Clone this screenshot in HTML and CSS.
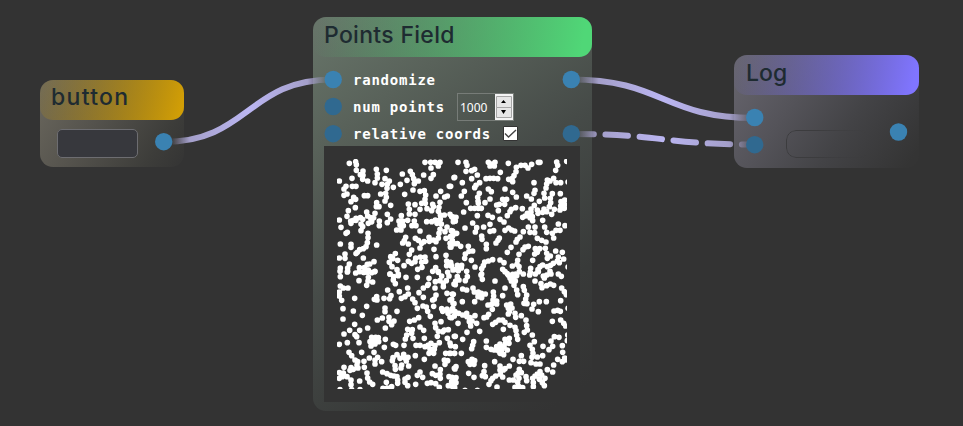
FILE: index.html
```
<!DOCTYPE html>
<html lang="en">
<head>
<meta charset="utf-8">
<title>Node editor</title>
<link rel="stylesheet" href="styles.css">
</head>
<body>
<main class="canvas">
  <section class="node node-button">
    <header class="title">button</header>
    <div class="button-body"><button class="push" aria-label="trigger"></button></div>
  </section>

  <section class="node node-points">
    <header class="title">Points Field</header>
    <div class="rows">
      <div class="row">randomize</div>
      <div class="row">num points
        <span class="spin"><span class="value">1000</span>
          <svg class="arrows" width="18" height="26" viewBox="0 0 18 26"><path fill="#f4f4f4" d="M0 0h18v26H0z"/><path fill="#e6e6e6" stroke="#a6a6a6" d="M1.500 2.500h15v11h-15zM1.500 13.500h15v10h-15z"/><path d="M6 9h5L8.500 6zM6 16h5l-2.500 4z"/></svg>
        </span>
      </div>
      <div class="row">relative coords
        <svg class="check" width="15" height="15" viewBox="0 0 15 15"><path fill="#fff" stroke="#333" d="M.5.5h14v14H.5z"/><path fill="none" stroke="#444" stroke-width="1.400" d="M2 7.500l3.500 3.500 7.500-7"/></svg>
      </div>
    </div>
    <div class="plot"><svg class="field" width="230" height="230" viewBox="337 159 230 230"></svg></div>
  </section>

  <section class="node node-log">
    <header class="title">Log</header>
    <div class="log-body"><div class="pill"></div></div>
  </section>

  <svg class="wires" width="963" height="426" viewBox="0 0 963 426">
    <defs>
      <linearGradient id="w1" gradientUnits="userSpaceOnUse" x1="164" y1="0" x2="333" y2="0"><stop offset=".04" stop-color="#a49fca" stop-opacity="0"/><stop offset=".15" stop-color="#a49fca"/><stop offset=".5" stop-color="#bbb6f2"/><stop offset=".85" stop-color="#a49fca"/><stop offset=".97" stop-color="#a49fca" stop-opacity="0"/></linearGradient>
      <linearGradient id="w2" gradientUnits="userSpaceOnUse" x1="571" y1="0" x2="755" y2="0"><stop offset=".02" stop-color="#a49fca" stop-opacity="0"/><stop offset=".15" stop-color="#a49fca"/><stop offset=".5" stop-color="#bbb6f2"/><stop offset=".86" stop-color="#a49fca"/><stop offset=".98" stop-color="#a49fca" stop-opacity="0"/></linearGradient>
    </defs>
    <g fill="none" stroke-width="6">
      <path stroke="url(#w1)" d="M164 142C248 142 248 79.500 333 79.500"/>
      <path stroke="url(#w2)" d="M571 79.500C663 79.500 663 118 755 118"/>
      <path class="dashed" stroke="url(#w2)" d="M571 134C663 134 663 144.500 755 144.500"/>
    </g>
    <g fill="#3a82b2">
      <circle cx="163.700" cy="141.700" r="8.700"/><circle cx="333.200" cy="79.500" r="8.700"/><circle cx="571.300" cy="79.500" r="8.700"/>
      <circle cx="754.700" cy="117.500" r="8.700"/><circle cx="898.500" cy="132" r="8.700"/>
    </g>
    <g fill="#306990">
      <circle cx="333.200" cy="106.500" r="8.700"/><circle cx="333.200" cy="133.700" r="8.700"/><circle cx="571.300" cy="133.700" r="8.700"/><circle cx="754.700" cy="144.700" r="8.700"/>
    </g>
  </svg>
</main>
<script src="points.js"></script>
</body>
</html>
```
FILE: styles.css
```
body { margin: 0; background: #333; }
.canvas { position: relative; width: 963px; height: 426px; overflow: hidden; background: #333; }
.node { position: absolute; box-sizing: border-box; border-radius: 13px; display: flex; flex-direction: column; }
.node-button { left: 40px; top: 80px; width: 144px; height: 87px; background: linear-gradient(122deg, #6b685e, #55534d 40%, #3d3d3a 80%, #343434); }
.node-points { left: 313px; top: 17px; width: 279px; height: 394px; background: linear-gradient(145deg, #68766a, #59625a 22%, #464b48 48%, #383a39 75%, #333 95%); }
.node-log { left: 734px; top: 55px; width: 185px; height: 113px; background: linear-gradient(125deg, #68666f, #545359 35%, #434346 62%, #343434 95%); }
.title { box-sizing: border-box; height: 40px; flex: none; padding-left: 11px; border-radius: 13px; font: 450 23px/37px Inter, sans-serif; color: #1e2b31; white-space: nowrap; }
.node-button .title { background: linear-gradient(105deg, #cc9a0618 0%, #d19e06 96%); letter-spacing: 1.3px; line-height: 35px; }
.node-points .title { background: linear-gradient(100deg, #50d77700 2%, #50d777 96%); letter-spacing: .3px; }
.node-log .title { padding-left: 12px; background: linear-gradient(102deg, #8075ff08 2%, #8075ff 96%); }
.button-body { padding: 9px 0 0 17px; }
.push { display: block; box-sizing: border-box; width: 81px; height: 29px; padding: 0; border: 1px solid #6d6d71; border-radius: 5px; background: #37383d; }
.rows { display: flex; flex-direction: column; padding: 9px 0 0 40px; }
.row { display: flex; align-items: center; height: 27px; font: bold 14px "DejaVu Sans Mono", monospace; letter-spacing: .77px; color: #fff; white-space: nowrap; }
.spin { box-sizing: border-box; display: flex; width: 57px; height: 28px; margin-left: 12px; border: 1px solid #777c78; justify-content: space-between; }
.value { padding-left: 2px; font: 12px/27px "Noto Sans", sans-serif; letter-spacing: 0; }
.arrows { display: block; }
.check { margin-left: 12px; }
.plot { box-sizing: border-box; width: 256px; height: 256px; margin: -1px 0 0 11px; padding: 13px; background: #333; }
.field { display: block; }
.log-body { padding: 35px 0 0 52px; }
.pill { width: 84px; height: 28px; box-sizing: border-box; border: 1px solid #3c3c3e; border-radius: 10px; -webkit-mask-image: linear-gradient(90deg, #000 35%, transparent 95%); mask-image: linear-gradient(90deg, #000 35%, transparent 95%); }
.wires { position: absolute; left: 0; top: 0; }
.dashed { stroke-linecap: round; stroke-dasharray: 22.6 11.7; stroke-dashoffset: 0; }
```
FILE: points.js
```
// Samples are grouped in tiles: origin in canvas pixels, offsets in thirds of a pixel.
const tiles = [
  [325, 150, `73,40 92,35 94,44 300,37 317,37 330,37 345,37 340,48 318,54 94,61 114,63 154,58 184,61 256,64 232,72 106,74 114,76 113,88 157,72 157,84 262,74 296,75 325,74 318,85 43,93 81,85 128,93 150,98 180,86 193,93 171,103 187,103 186,115 205,112 226,103 246,91 266,86 280,93 268,101 264,120 63,109 57,117 82,109 93,109 285,124 298,122 302,135 300,148 301,160 373,109 347,124 387,83 57,136 66,132 118,137 128,137 167,132 182,130 184,142 180,153 239,133 333,138 359,141 367,138 86,142 92,148 78,155 91,173 155,158 154,170 162,170 197,166 250,162 270,164 290,160 345,157 323,163 253,178 253,192 270,193 285,178 306,176 320,182 325,170 342,172 340,184 346,195 358,195 70,182 66,199 43,210 48,232 78,220 85,211 93,205 77,213 93,211 106,203 113,208 125,186 128,198 136,203 140,215 150,190 146,203 130,220 108,222 113,230 138,216 163,213 163,227 187,193 197,207 187,218 229,197 222,213 233,213 225,225 235,227 215,240 228,240 248,211 268,213 261,227 273,227 305,215 320,215 331,210 346,208 349,222 336,220 345,238 342,250 340,264 375,193 385,201 389,213 366,231 360,245 383,243 376,260 363,265 375,280 376,291 387,281 67,247 63,250 108,242 129,250 129,263 127,278 123,290 46,282 78,283 78,292 155,285 115,296 104,299 97,307 93,311 60,312 60,325 43,324 46,354 115,324 147,335 134,342 242,262 238,272 233,279 250,282 271,265 280,271 285,243 290,280 285,294 297,275 312,262 313,274 325,270 333,275 327,298 260,300 253,313 211,311 197,320 203,326 218,331 193,337 201,350 216,359 237,347 250,334 260,340 270,335 272,324 286,321 300,321 302,334 290,337 291,352 278,358 333,320 363,316 365,333 365,347 378,344 332,353 323,364 340,367 73,342 68,354 67,366 103,353 118,353 127,343 130,360 150,364 118,367 140,368 195,372 220,372 384,360`],
  [450, 150, `24,37 48,37 51,46 115,37 125,42 135,37 120,48 133,48 175,40 245,43 270,37 265,37 320,36 323,46 350,34 48,64 65,62 74,58 82,75 65,86 14,82 37,98 151,67 199,52 213,46 225,46 234,54 198,65 192,77 176,88 188,95 186,86 317,61 311,85 292,90 300,93 108,86 120,85 131,85 143,86 252,98 318,98 332,98 290,102 354,96 2,109 89,98 78,106 74,113 115,117 124,125 165,117 43,124 34,138 88,130 83,142 84,153 85,160 49,158 120,147 105,158 188,127 199,141 255,121 252,130 230,138 244,147 268,154 253,166 282,130 288,114 284,144 307,131 331,131 301,145 302,158 298,170 344,150 333,155 344,164 332,168 343,175 330,180 158,148 170,148 148,163 140,165 164,163 145,182 62,175 74,175 85,175 94,175 82,197 41,186 197,173 184,178 180,185 172,197 217,176 243,177 243,187 262,180 264,190 232,190 225,198 218,202 247,200 240,203 248,212 282,177 290,185 278,187 305,193 313,178 278,211 114,196 127,202 150,208 162,216 5,200 18,202 10,215 16,213 45,234 68,219 80,233 76,246 101,231 120,223 120,244 131,242 165,241 176,234 185,240 194,243 220,245 235,231 240,247 255,231 254,248 284,231 325,222 345,227 330,241 318,241 307,250 290,247 311,264 4,242 20,250 8,257 7,272 22,281 3,291 32,289 95,258 96,268 109,283 109,296 148,264 144,271 138,279 210,261 202,268 198,276 262,265 275,271 288,276 183,292 172,307 235,289 225,291 219,299 207,313 55,289 68,303 57,304 46,312 44,325 64,331 256,296 269,296 262,307 254,312 286,295 290,310 301,318 292,325 317,303 337,307 325,321 341,327 322,333 328,338 310,340 302,346 248,331 2,337 4,348 22,346 35,346 34,354 17,358 75,351 104,336 115,333 128,329 100,347 95,356 150,330 162,338 158,358 203,331 201,343 187,348 207,350 242,355 241,366 278,345 270,350 264,359 292,350 354,351 172,371 197,372 220,372 303,372 325,372 95,372`],
  [325, 270, `45,4 68,4 46,20 92,9 103,5 115,7 128,7 149,5 102,32 130,22 129,33 143,36 125,46 195,12 206,20 205,30 220,17 211,41 243,22 277,22 312,25 310,43 331,35 345,32 350,18 355,40 364,32 355,50 372,18 368,7 340,5 387,42 46,48 55,54 69,54 43,66 43,78 50,91 89,85 188,60 223,65 248,54 250,72 240,80 229,85 198,77 194,86 177,85 155,80 148,88 156,90 282,68 295,82 295,54 308,46 330,54 333,75 328,87 323,90 366,70 382,72 375,90 384,100 263,87 270,98 54,116 85,123 125,109 112,136 180,114 180,125 216,124 277,115 294,108 304,111 308,124 326,109 316,139 350,116 366,117 353,124 369,130 383,115 375,142 388,138 54,147 89,163 157,150 172,144 192,142 192,154 207,153 200,164 181,174 254,154 268,150 281,143 330,160 332,173 285,171 296,181 340,184 348,155 353,185 358,180 370,179 74,181 104,181 128,174 57,192 90,194 95,200 43,223 67,218 102,218 140,202 152,202 160,203 135,215 147,215 161,215 138,228 150,222 181,208 178,232 205,223 212,226 237,226 248,178 262,179 260,190 245,195 241,207 264,205 298,205 337,199 343,218 367,205 388,199 273,226 285,226 300,230 310,225 318,220 330,227 315,238 328,238 312,250 326,250 375,219 362,250 373,250 388,250 72,247 80,257 110,247 147,247 158,262 170,275 150,270 150,282 133,264 117,274 90,270 98,275 96,285 99,294 118,292 236,253 216,254 204,263 202,272 225,265 240,265 249,262 244,273 271,257 298,268 358,270 368,272 360,283 210,287 230,285 228,294 211,298 251,288 330,288 388,295 57,292 78,293 75,301 85,298 43,308 55,309 43,325 52,320 66,320 78,330 78,344 104,333 126,309 128,324 134,336 143,343 173,306 186,311 197,316 207,318 216,320 218,330 218,340 184,337 174,355 187,354 200,350 249,322 240,327 240,337 248,347 272,343 285,306 277,316 293,322 322,311 332,316 346,299 345,312 346,325 307,340 318,338 332,341 343,352 372,320 381,322 388,335 370,347 383,350 45,359 80,359 105,359`],
  [450, 270, `52,20 22,20 17,33 16,44 27,30 46,32 93,15 97,28 135,33 25,2 50,4 165,5 175,15 188,13 180,24 192,22 200,17 184,33 196,33 192,46 165,54 200,60 203,74 208,5 239,15 256,12 290,15 283,24 280,18 334,19 265,5 300,4 255,33 273,41 276,53 290,47 311,46 301,42 220,50 223,61 230,75 227,87 335,54 343,65 349,74 38,57 50,60 69,54 73,66 85,66 94,70 106,72 84,80 95,83 130,66 131,78 129,90 140,93 140,102 125,103 114,105 127,118 158,77 10,73 5,88 12,101 37,95 74,95 170,105 182,102 175,115 186,114 178,125 175,132 222,100 231,101 251,103 246,117 268,95 289,95 332,92 265,125 312,123 323,121 331,124 354,115 5,123 15,125 26,130 38,135 50,130 51,140 60,143 58,155 66,153 62,168 80,160 75,137 24,160 5,143 102,143 110,141 116,133 89,184 51,187 195,130 197,142 214,137 228,150 230,167 232,180 223,187 128,163 137,157 147,150 158,150 165,157 160,178 180,166 195,172 198,182 200,196 203,208 307,154 332,150 341,160 347,168 247,195 253,215 240,226 247,238 249,250 246,262 262,261 313,200 327,202 303,213 308,229 297,239 279,229 278,257 337,227 338,247 344,264 353,195 352,212 323,268 337,275 346,270 16,199 38,208 71,215 68,226 65,236 109,213 109,232 165,208 178,205 167,219 177,220 150,222 140,230 152,230 162,230 172,240 123,238 133,240 145,242 155,240 150,250 161,254 2,227 16,230 14,250 34,250 2,250 55,275 66,268 74,272 60,283 72,283 134,275 189,268 214,257 208,274 221,274 243,278 258,282 270,282 178,288 104,287 18,290 15,297 56,310 72,322 102,305 97,317 106,320 150,288 150,300 160,300 165,296 151,312 158,321 137,318 128,325 123,332 117,343 141,351 208,298 204,310 214,308 198,315 207,325 203,337 178,330 190,330 228,320 230,332 248,325 255,318 262,312 270,305 275,315 285,325 268,328 277,338 283,347 250,338 250,350 292,299 308,306 311,285 18,323 5,335 18,338 14,353 195,352 207,350 218,353 45,361 82,361`]
];
const field = document.querySelector('.field');
for (const [x, y, data] of tiles) {
  const path = document.createElementNS('http://www.w3.org/2000/svg', 'path');
  path.setAttribute('d', data.split(' ').map(p => `M${p}h.01`).join(''));
  path.setAttribute('transform', `translate(${x} ${y}) scale(.33333)`);
  path.setAttribute('stroke', '#fff');
  path.setAttribute('stroke-width', '17');
  path.setAttribute('stroke-linecap', 'round');
  field.append(path);
}
```
